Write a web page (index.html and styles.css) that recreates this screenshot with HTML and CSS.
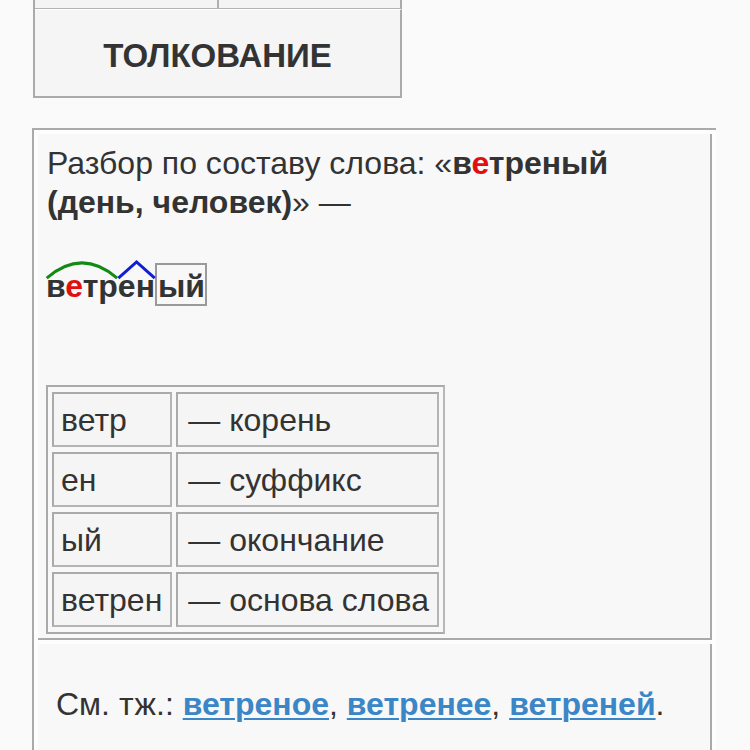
FILE: index.html
```html
<!DOCTYPE html>
<html lang="ru">
<head>
<meta charset="utf-8">
<title>ветреный — разбор по составу</title>
<link rel="stylesheet" href="styles.css">
</head>
<body>
<div class="nav">
  <div class="nav-tabs">
    <div class="tab"></div>
    <div class="tab"></div>
  </div>
  <div class="nav-button">ТОЛКОВАНИЕ</div>
</div>

<div class="main">
  <div class="cell cell-parse">
    <p class="intro">Разбор по составу слова: «<b>в<span class="red">е</span>треный</b> <b>(день, человек)</b>» —</p>
    <div class="morph"><span class="root">в<span class="red">е</span>тр<svg class="mark" viewBox="0 0 100 20" preserveAspectRatio="none"><path d="M1 19 Q50 -13 99 19" fill="none" stroke="#138a13" stroke-width="3" vector-effect="non-scaling-stroke"/></svg></span><span class="suffix">ен<svg class="mark" viewBox="0 0 100 20" preserveAspectRatio="none"><path d="M1 19 L50 2 L99 19" fill="none" stroke="#1020d0" stroke-width="3" vector-effect="non-scaling-stroke"/></svg></span><span class="ending">ый</span></div>
    <table class="parts">
      <tr><td class="c1">ветр</td><td class="c2">— корень</td></tr>
      <tr><td class="c1">ен</td><td class="c2">— суффикс</td></tr>
      <tr><td class="c1">ый</td><td class="c2">— окончание</td></tr>
      <tr><td class="c1">ветрен</td><td class="c2">— основа слова</td></tr>
    </table>
  </div>
  <div class="cell cell-see">
    <p class="see">См. тж.: <a href="#">ветреное</a>, <a href="#">ветренее</a>, <a href="#">ветреней</a>.</p>
  </div>
</div>
</body>
</html>
```

FILE: styles.css
```css
html, body {
  margin: 0;
  padding: 0;
  background: #fafafa;
}
body {
  font-family: "Liberation Sans", Arial, sans-serif;
  color: #333;
  font-size: 32px;
  overflow: hidden;
  height: 750px;
}

/* top navigation */
.nav {
  margin-left: 33px;
  width: 367px;
  border-left: 2px solid #aaa;
}
.nav-tabs {
  display: flex;
  height: 9px;
}
.tab {
  flex: 1;
  background: #f4f4f4;
  border-bottom: 1px solid #b4b4b4;
  border-right: 2px solid #b0b0b0;
}
.tab + .tab {
  border-right: 2px solid #aaa;
}
.nav-button {
  box-sizing: border-box;
  height: 89px;
  display: flex;
  align-items: center;
  justify-content: center;
  background: #f5f5f5;
  border-top: 1px solid #fff;
  border-right: 2px solid #aaa;
  border-bottom: 2px solid #aaa;
  font-weight: bold;
  font-size: 33px;
  color: #333;
  padding-top: 5px;
}

/* main box */
.main {
  margin-top: 30px;
  margin-left: 32px;
  width: 674px;
  padding: 4px 4px 0 4px;
  border-top: 2px solid #aaa;
  border-left: 2px solid #aaa;
  background: #fdfdfd;
}
.cell {
  background: #f8f8f8;
  border-right: 2px solid #aaa;
  border-bottom: 2px solid #aaa;
}
.cell-parse {
  padding: 10px 8px 4px 8px;
}
.intro {
  margin: 0;
  line-height: 39px;
  padding-left: 1px;
}
.red {
  color: #e01010;
}

.morph {
  margin-top: 44px;
  line-height: 40px;
  font-weight: bold;
  white-space: nowrap;
}
.root, .suffix {
  position: relative;
}
.mark {
  position: absolute;
  left: 0;
  top: -8px;
  width: 100%;
  height: 19px;
  overflow: visible;
}
.ending {
  border: 2px solid #9a9a9a;
  padding: 3px 0 0 1px;
}

.parts {
  margin-top: 79px;
  border-collapse: separate;
  border-spacing: 4px 5px;
  border: 2px solid #aaa;
  border-right-color: #b8b8b8;
  background: #f8f8f8;
}
.parts td {
  border: 2px solid #aaa;
  border-right-color: #b4b4b4;
  border-bottom-color: #b4b4b4;
  background: #f5f5f5;
  padding: 0 8px 0 7px;
  height: 51px;
  line-height: 36px;
  white-space: nowrap;
}
.parts .c1 {
  width: 101px;
}
.parts .c2 {
  width: 234px;
  padding-left: 10px;
}

.cell-see {
  margin-top: 4px;
  height: 200px;
  padding: 41px 19px 0 18px;
  border-bottom: none;
}
.see {
  margin: 0;
  line-height: 39px;
}
.see a {
  color: #3b86c6;
  font-weight: bold;
  text-decoration: underline;
  text-decoration-thickness: 2px;
  text-underline-offset: 3px;
}
```
